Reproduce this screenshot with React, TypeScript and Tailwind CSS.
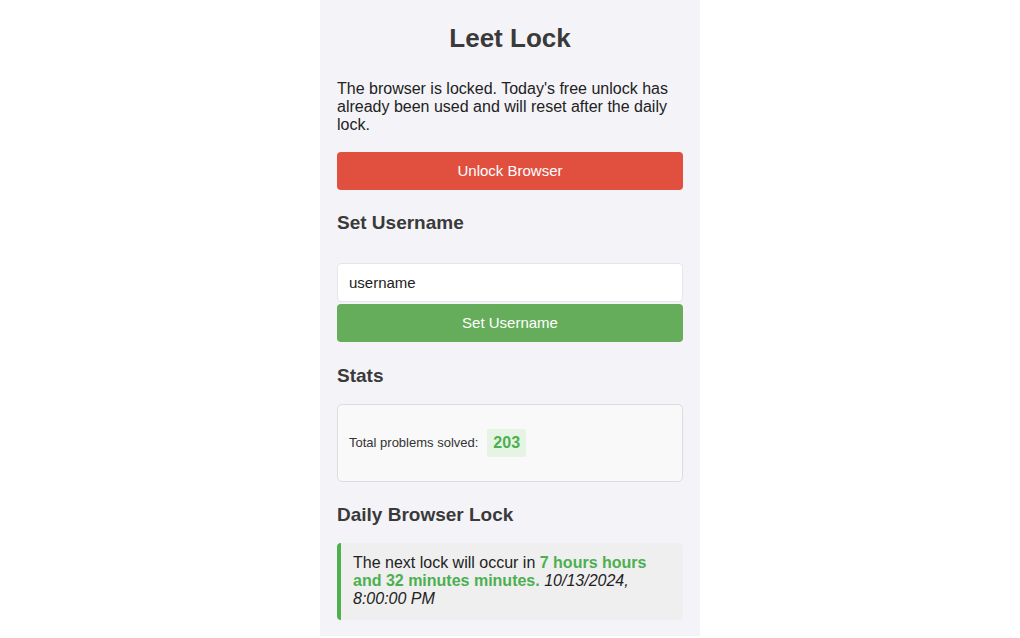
export default function App() {
    return (
        <div className="min-h-[638px] bg-white flex justify-center" style={{ fontFamily: '"Liberation Sans", Arial, sans-serif' }}>
            <div className="w-[380px] h-[636px] bg-[#f4f4f8] px-[17px] pt-[24px] text-[#333]">
                <h1 className="text-center text-[26px] leading-[28px] font-bold text-[#3a3a3a]">Leet Lock</h1>

                <p className="mt-[28px] text-[16px] leading-[18px] text-[#222]">
                    The browser is locked. Today's free unlock has already been used and will reset after the daily lock.
                </p>

                <button className="mt-[18px] w-full h-[38px] rounded-[4px] bg-[#e1503f] text-white text-[15px]">
                    Unlock Browser
                </button>

                <h2 className="mt-[22px] text-[19px] leading-[21px] font-bold text-[#3a3a3a]">Set Username</h2>

                <input
                    defaultValue="username"
                    className="mt-[30px] block w-full h-[39px] rounded-[4px] border border-[#e6e6ea] bg-white px-[11px] text-[15px] text-[#222] outline-none"
                />
                <button className="mt-[2px] w-full h-[38px] rounded-[4px] bg-[#66ad5b] text-white text-[15px]">
                    Set Username
                </button>

                <h2 className="mt-[23px] text-[19px] leading-[21px] font-bold text-[#3a3a3a]">Stats</h2>

                <div className="mt-[18px] h-[78px] rounded-[5px] border border-[#dcdcdc] bg-[#f9f9f9] px-[11px] flex items-center">
                    <span className="text-[13px] text-[#333]">Total problems solved:</span>
                    <span className="ml-[9px] h-[28px] px-[6px] flex items-center rounded-[2px] bg-[#e6f4e4] text-[16px] font-bold text-[#4caf50]">203</span>
                </div>

                <h2 className="mt-[22px] text-[19px] leading-[21px] font-bold text-[#3a3a3a]">Daily Browser Lock</h2>

                <div className="mt-[18px] border-l-[4px] border-[#4caf50] rounded-[4px] bg-[#efefef] pl-[12px] pr-[10px] pt-[11px] pb-[12px] text-[16px] leading-[18px] text-[#222]">
                    The next lock will occur in{" "}
                    <span className="font-bold text-[#4caf50]">7 hours hours and 32 minutes minutes.</span>{" "}
                    <em>10/13/2024, 8:00:00 PM</em>
                </div>
            </div>
        </div>
    );
}
